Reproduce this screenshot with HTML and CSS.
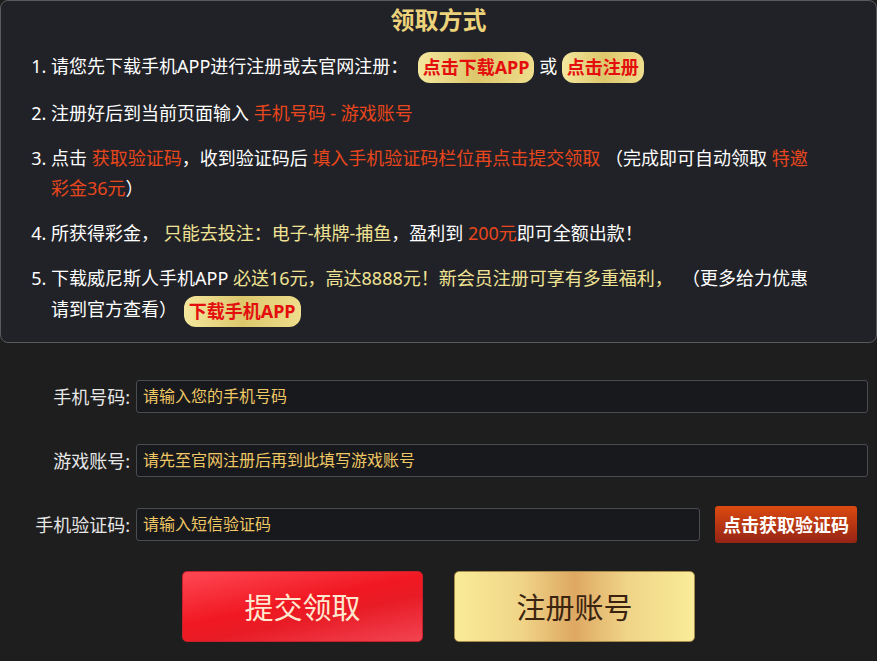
FILE: index.html
```html
<!DOCTYPE html>
<html lang="zh-CN">
<head>
  <meta charset="UTF-8">
  <title>领取方式</title>
  <link rel="stylesheet" href="styles.css">
</head>
<body>

  <div class="panel">
    <h2 class="panel-title">领取方式</h2>
    <ol class="steps">
      <li>请您先下载手机APP进行注册或去官网注册： &nbsp;<a class="pill" href="#">点击下载APP</a> 或 <a class="pill" href="#">点击注册</a></li>
      <li>注册好后到当前页面输入 <span class="red">手机号码 - 游戏账号</span></li>
      <li>点击 <span class="red">获取验证码</span>，收到验证码后 <span class="red">填入手机验证码栏位再点击提交领取</span> （完成即可自动领取 <span class="red">特邀彩金36元</span>）</li>
      <li>所获得彩金， <span class="yellow">只能去投注：电子-棋牌-捕鱼</span>，盈利到 <span class="red">200元</span>即可全额出款！</li>
      <li>下载威尼斯人手机APP <span class="yellow">必送16元，高达8888元！新会员注册可享有多重福利，</span> &nbsp;（更多给力优惠请到官方查看） <a class="pill pill-low" href="#">下载手机APP</a></li>
    </ol>
  </div>

  <form class="form">
    <label class="form-label" for="phone">手机号码:</label>
    <input class="form-input" id="phone" type="text" placeholder="请输入您的手机号码">

    <label class="form-label" for="account">游戏账号:</label>
    <input class="form-input" id="account" type="text" placeholder="请先至官网注册后再到此填写游戏账号">

    <label class="form-label" for="code">手机验证码:</label>
    <div class="code-field">
      <input class="form-input" id="code" type="text" placeholder="请输入短信验证码">
      <button class="code-btn" type="button">点击获取验证码</button>
    </div>
  </form>

  <div class="actions">
    <button class="btn btn-red" type="button">提交领取</button>
    <button class="btn btn-gold" type="button">注册账号</button>
  </div>

</body>
</html>
```

FILE: styles.css
```css
body {
  margin: 0;
  background: #1e1e1e;
  color: #fff;
  font-family: "Noto Sans", "Noto Sans CJK SC", sans-serif;
}

.panel {
  background: #212227;
  border: 1px solid #5a5a5e;
  border-radius: 8px;
  padding-bottom: 12px;
}
.panel-title {
  margin: 0;
  font-size: 24px;
  line-height: 38px;
  text-align: center;
  color: #ecd27a;
  font-weight: bold;
}

.steps {
  margin: 12px 0 0;
  padding: 0 55px 0 50px;
  font-size: 18px;
  line-height: 30px;
}
.steps li {
  margin-bottom: 15px;
}
.steps li:last-child {
  margin-bottom: 0;
}
.red {
  color: #e8461c;
}
.yellow {
  color: #f0e294;
}

.pill {
  display: inline-block;
  vertical-align: middle;
  height: 31px;
  line-height: 31px;
  padding: 0 5px;
  margin: -2px 0 0;
  border-radius: 12px;
  background: linear-gradient(90deg, #f4e79e, #dcc76c 50%, #eedd8c);
  color: #e40e0e;
  font-weight: bold;
  text-decoration: none;
}
.pill-low {
  margin: 3px 0 3px 2px;
}

.form {
  display: grid;
  grid-template-columns: 130px 1fr;
  column-gap: 6px;
  row-gap: 31px;
  align-items: center;
  margin-top: 37px;
  padding-right: 9px;
}
.form-label {
  text-align: right;
  font-size: 18px;
  color: #e6e6e6;
}
.form-input {
  box-sizing: border-box;
  height: 33px;
  width: 100%;
  padding: 0 6px;
  background: #18191c;
  border: 1px solid #4b4c52;
  border-radius: 3px;
  color: #f0c860;
  font-family: inherit;
  font-size: 16px;
}
.form-input::placeholder {
  color: #efc765;
}
.code-field {
  display: flex;
  align-items: center;
}
.code-field .form-input {
  width: 564px;
}
.code-btn {
  height: 37px;
  margin: -2px 0 -2px 15px;
  padding: 0 8px;
  border: none;
  border-radius: 3px;
  background: linear-gradient(#dc4a10, #952415);
  color: #fff;
  font-family: inherit;
  font-size: 18px;
  font-weight: bold;
}

.actions {
  display: flex;
  justify-content: center;
  gap: 31px;
  margin-top: 30px;
}
.btn {
  width: 241px;
  height: 71px;
  border-radius: 5px;
  font-family: inherit;
  font-size: 29px;
}
.btn-red {
  border: 1px solid #c8202a;
  background: linear-gradient(168deg, #ff4854 0%, #f01822 45%, #e81c26 62%, #f24452 100%);
  color: #ffe8d0;
}
.btn-gold {
  border: 1px solid #a88a4a;
  background: linear-gradient(90deg, #f9ec98 0%, #f0d488 28%, #dea862 50%, #f0d488 72%, #f9ec98 100%);
  color: #3a2410;
}
```
